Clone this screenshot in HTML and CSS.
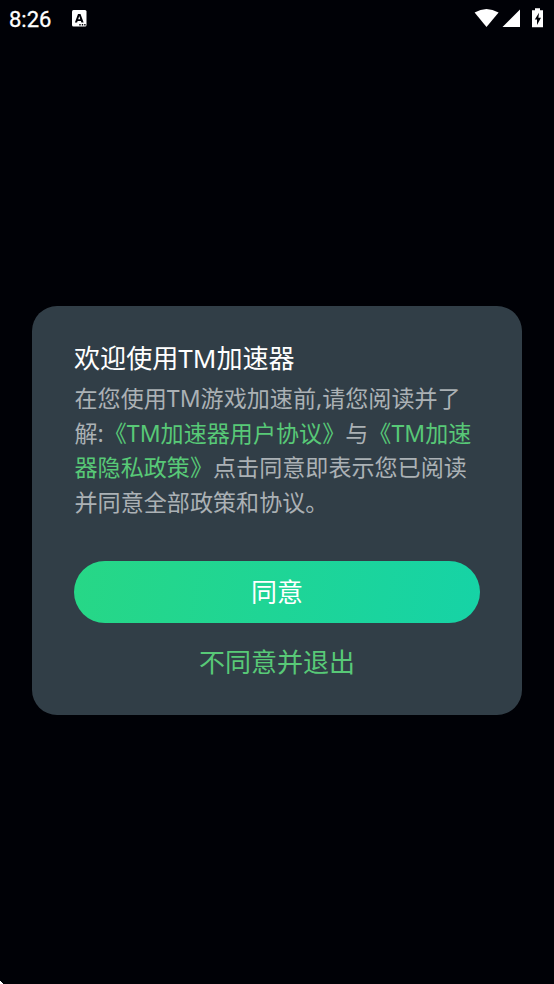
FILE: index.html
```html
<!DOCTYPE html>
<html lang="zh-CN">
<head>
<meta charset="utf-8">
<title>TM加速器</title>
<link rel="stylesheet" href="styles.css">
</head>
<body>
<header class="status">
  <span class="time">8:26</span>
  <svg class="app" width="15" height="17" viewBox="0 0 15 17"><rect width="14.500" height="16.500" rx="1.500" fill="#fff"/><path fill-rule="evenodd" d="M2.900 12.500L6 3.900H8.500L11.600 12.500H9.400L8.900 10.900H5.600L5.100 12.500zM6.200 9.200H8.300L7.250 6z" fill="#000106"/><path d="M7.300 14h1.400v1.400H7.300zM9.800 14h1.400v1.400H9.800zM12.200 14h1.400v1.400h-1.400z" fill="#000106"/></svg>
  <svg class="signals" width="70" height="20" viewBox="0 0 70 20" fill="#fff"><path d="M.6 4.500Q12.400-2.500 24.600 4.500L12.500 19z"/><path d="M46 1.500V19H28.500z"/><path d="M61 .3h5v2h3v17H58V2.300h3z"/><path d="M65 4.800L60.800 11.500H63V17L67 9.800H64.400z" fill="#000106"/></svg>
</header>
<main class="dialog">
  <h1>欢迎使用TM加速器</h1>
  <p class="message">在您使用TM游戏加速前,请您阅读并了<br>解:<a>《TM加速器用户协议》</a>与<a>《TM加速<br>器隐私政策》</a>点击同意即表示您已阅读<br>并同意全部政策和协议。</p>
  <button class="agree">同意</button>
  <button class="decline">不同意并退出</button>
</main>
<i class="corner"></i>
</body>
</html>
```

FILE: styles.css
```css
* { box-sizing: border-box; }
body {
  margin: 0;
  height: 984px;
  overflow: hidden;
  background: #000106;
  color: #fff;
  font-family: "Noto Sans", "Noto Sans CJK SC", sans-serif;
}
.status {
  height: 306px;
  padding: 8px 10px 0 9px;
  display: flex;
  align-items: flex-start;
  font-family: Roboto, sans-serif;
}
.time { font-size: 22px; line-height: 24px; width: 63px; font-weight: 400; -webkit-text-stroke: .3px #fff; }
.app { margin-top: 2px; }
.signals { margin-left: auto; }
.dialog {
  width: 490px;
  height: 409px;
  margin: 0 auto;
  padding: 33px 42px 0;
  border-radius: 25px;
  background: #313e47;
}
h1 { margin: 0; font-size: 26.080px; line-height: 38px; font-weight: 400; white-space: nowrap; }
.message {
  margin: 4.200px 0 0;
  padding-left: .5px;
  font-size: 23.080px;
  line-height: 34.600px;
  color: #abb1b5;
  white-space: nowrap;
}
.message a { color: #58c977; }
button {
  display: block;
  width: 100%;
  padding: 0;
  border: 0;
  font: 26px/38px "Noto Sans", "Noto Sans CJK SC", sans-serif;
}
.agree {
  height: 62px;
  margin-top: 41.400px;
  border-radius: 31px;
  color: #fff;
  background: linear-gradient(100deg, #27d786, #16d3a6);
}
.decline { margin-top: 20.500px; color: #58c977; background: none; }
.corner {
  position: absolute;
  left: 0;
  bottom: 0;
  width: 3px;
  height: 3px;
  background: linear-gradient(45deg, #fff 50%, transparent 60%);
}
```
